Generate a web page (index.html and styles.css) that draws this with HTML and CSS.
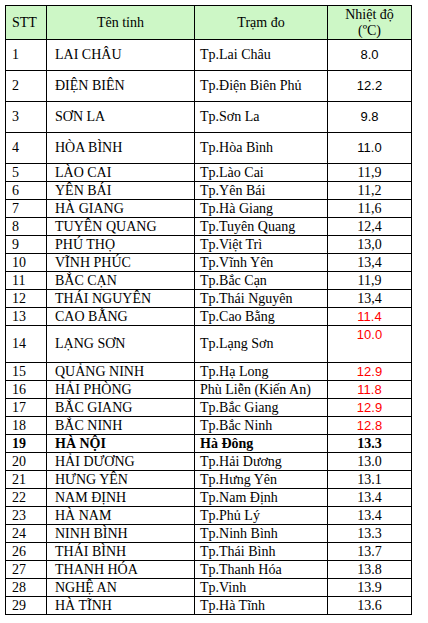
FILE: index.html
```html
<!DOCTYPE html>
<html lang="vi">
<head>
<meta charset="utf-8">
<title>Nhiệt độ</title>
<link rel="stylesheet" href="styles.css">
</head>
<body>
<table class="grid">
  <colgroup>
    <col class="c1"><col class="c2"><col class="c3"><col class="c4">
  </colgroup>
  <tr class="head">
    <td class="stt">STT</td>
    <td class="ctr">Tên tỉnh</td>
    <td class="ctr">Trạm đo</td>
    <td class="ctr hd">Nhiệt độ<br>(ºC)</td>
  </tr>
  <tr class="tall"><td class="stt">1</td><td class="name">LAI CHÂU</td><td class="st">Tp.Lai Châu</td><td class="num sans">8.0</td></tr>
  <tr class="tall"><td class="stt">2</td><td class="name">ĐIỆN BIÊN</td><td class="st">Tp.Điện Biên Phủ</td><td class="num sans">12.2</td></tr>
  <tr class="tall"><td class="stt">3</td><td class="name">SƠN LA</td><td class="st">Tp.Sơn La</td><td class="num sans">9.8</td></tr>
  <tr class="tall"><td class="stt">4</td><td class="name">HÒA BÌNH</td><td class="st">Tp.Hòa Bình</td><td class="num sans">11.0</td></tr>
  <tr class="row"><td class="stt">5</td><td class="name">LÀO CAI</td><td class="st">Tp.Lào Cai</td><td class="num">11,9</td></tr>
  <tr class="row"><td class="stt">6</td><td class="name">YÊN BÁI</td><td class="st">Tp.Yên Bái</td><td class="num">11,2</td></tr>
  <tr class="row"><td class="stt">7</td><td class="name">HÀ GIANG</td><td class="st">Tp.Hà Giang</td><td class="num">11,6</td></tr>
  <tr class="row"><td class="stt">8</td><td class="name">TUYÊN QUANG</td><td class="st">Tp.Tuyên Quang</td><td class="num">12,4</td></tr>
  <tr class="row"><td class="stt">9</td><td class="name">PHÚ THỌ</td><td class="st">Tp.Việt Trì</td><td class="num">13,0</td></tr>
  <tr class="row"><td class="stt">10</td><td class="name">VĨNH PHÚC</td><td class="st">Tp.Vĩnh Yên</td><td class="num">13,4</td></tr>
  <tr class="row"><td class="stt">11</td><td class="name">BẮC CẠN</td><td class="st">Tp.Bắc Cạn</td><td class="num">11,9</td></tr>
  <tr class="row"><td class="stt">12</td><td class="name">THÁI NGUYÊN</td><td class="st">Tp.Thái Nguyên</td><td class="num">13,4</td></tr>
  <tr class="row"><td class="stt">13</td><td class="name">CAO BẰNG</td><td class="st">Tp.Cao Bằng</td><td class="num sans red">11.4</td></tr>
  <tr class="mid"><td class="stt">14</td><td class="name">LẠNG SƠN</td><td class="st">Tp.Lạng Sơn</td><td class="num sans red top">10.0</td></tr>
  <tr class="row"><td class="stt">15</td><td class="name">QUẢNG NINH</td><td class="st">Tp.Hạ Long</td><td class="num sans red">12.9</td></tr>
  <tr class="row"><td class="stt">16</td><td class="name">HẢI PHÒNG</td><td class="st">Phù Liễn (Kiến An)</td><td class="num sans red">11.8</td></tr>
  <tr class="row"><td class="stt">17</td><td class="name">BẮC GIANG</td><td class="st">Tp.Bắc Giang</td><td class="num sans red">12.9</td></tr>
  <tr class="row"><td class="stt">18</td><td class="name">BẮC NINH</td><td class="st">Tp.Bắc Ninh</td><td class="num sans red">12.8</td></tr>
  <tr class="row bold"><td class="stt">19</td><td class="name">HÀ NỘI</td><td class="st">Hà Đông</td><td class="num">13.3</td></tr>
  <tr class="row"><td class="stt">20</td><td class="name">HẢI DƯƠNG</td><td class="st">Tp.Hải Dương</td><td class="num">13.0</td></tr>
  <tr class="row"><td class="stt">21</td><td class="name">HƯNG YÊN</td><td class="st">Tp.Hưng Yên</td><td class="num">13.1</td></tr>
  <tr class="row"><td class="stt">22</td><td class="name">NAM ĐỊNH</td><td class="st">Tp.Nam Định</td><td class="num">13.4</td></tr>
  <tr class="row"><td class="stt">23</td><td class="name">HÀ NAM</td><td class="st">Tp.Phủ Lý</td><td class="num">13.4</td></tr>
  <tr class="row"><td class="stt">24</td><td class="name">NINH BÌNH</td><td class="st">Tp.Ninh Bình</td><td class="num">13.3</td></tr>
  <tr class="row"><td class="stt">26</td><td class="name">THÁI BÌNH</td><td class="st">Tp.Thái Bình</td><td class="num">13.7</td></tr>
  <tr class="row"><td class="stt">27</td><td class="name">THANH HÓA</td><td class="st">Tp.Thanh Hóa</td><td class="num">13.8</td></tr>
  <tr class="row"><td class="stt">28</td><td class="name">NGHỆ AN</td><td class="st">Tp.Vinh</td><td class="num">13.9</td></tr>
  <tr class="row"><td class="stt">29</td><td class="name">HÀ TĨNH</td><td class="st">Tp.Hà Tĩnh</td><td class="num">13.6</td></tr>
</table>
</body>
</html>
```

FILE: styles.css
```css
html, body {
  margin: 0;
  padding: 0;
  background: #ffffff;
}

body {
  font-family: "Liberation Serif", "Times New Roman", serif;
  font-size: 14px;
  color: #000000;
}

.grid {
  margin: 5px 0 0 5px;
  border-collapse: collapse;
  table-layout: fixed;
  width: 406px;
}

.c1 { width: 41px; }
.c2 { width: 148px; }
.c3 { width: 133px; }
.c4 { width: 84px; }

.grid td {
  border: 1px solid #000000;
  padding: 0;
  line-height: 16px;
  white-space: nowrap;
  overflow: hidden;
  vertical-align: middle;
}

.head td {
  background: #cdf7c6;
  height: 33px;
}

.tall td { height: 30px; }
.row td { height: 17px; }
.mid td { height: 35px; }

.stt { padding-left: 6px !important; }
.name { padding-left: 8px !important; }
.st { padding-left: 5px !important; }
.ctr { text-align: center; }
.hd { line-height: 16px; }

.num { text-align: center; }
.sans {
  font-family: "Liberation Sans", Arial, sans-serif;
  font-size: 13px;
}
.red { color: #ff0000; }
.top {
  vertical-align: top !important;
  padding-top: 1px !important;
}

.bold td { font-weight: bold; }
```
